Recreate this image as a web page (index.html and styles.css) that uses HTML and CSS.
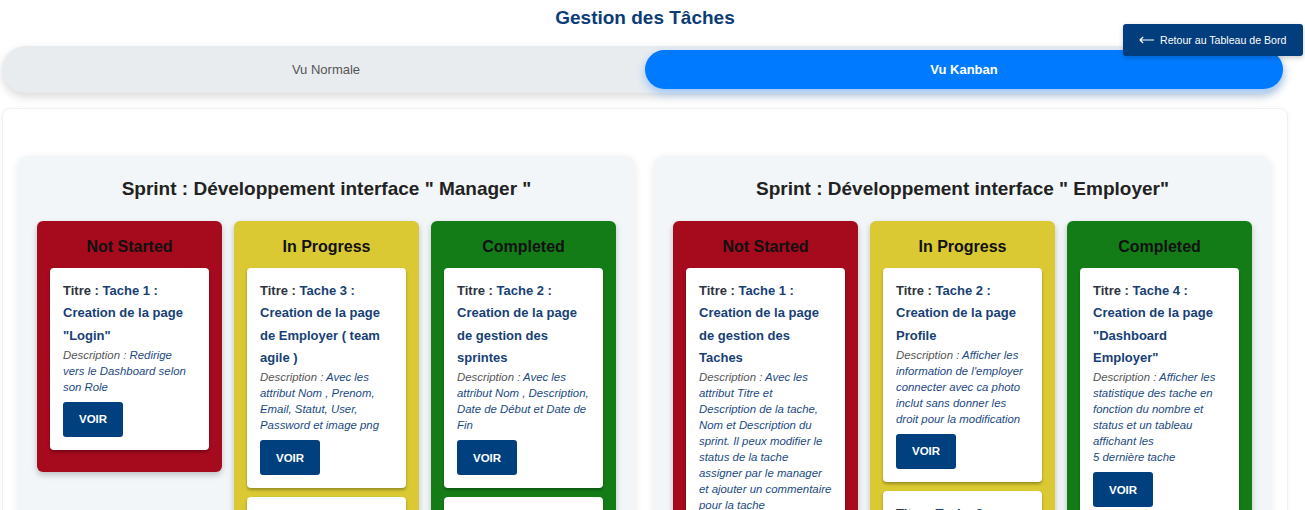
FILE: index.html
```html
<!DOCTYPE html>
<html lang="fr">
<head>
<meta charset="utf-8">
<title>Gestion des Tâches</title>
<link rel="stylesheet" href="styles.css">
</head>
<body>
<div class="app">
  <h1 class="page-title">Gestion des Tâches</h1>
  <button class="back-btn">
    <svg class="back-arrow" width="15" height="8" viewBox="0 0 15 8"><path d="M0.8 4 H15 M0.8 4 L4.2 1 M0.8 4 L4.2 7" fill="none" stroke="#fff" stroke-width="1.1"/></svg>
    <span>Retour au Tableau de Bord</span>
  </button>
  <div class="view-toggle">
    <button class="toggle-btn">Vu Normale</button>
    <button class="toggle-btn active">Vu Kanban</button>
  </div>

  <div class="board">
    <section class="sprint">
      <h2 class="sprint-title">Sprint : Développement interface " Manager "</h2>
      <div class="columns">
        <div class="column col-red">
          <h3 class="col-title">Not Started</h3>
          <div class="task-card">
            <p class="task-title"><span class="label">Titre : </span>Tache 1 : Creation de la page "Login"</p>
            <p class="task-desc"><span class="label">Description : </span>Redirige vers le Dashboard selon son Role</p>
            <button class="voir-btn">VOIR</button>
          </div>
        </div>
        <div class="column col-yellow">
          <h3 class="col-title">In Progress</h3>
          <div class="task-card">
            <p class="task-title"><span class="label">Titre : </span>Tache 3 : Creation de la page de Employer ( team agile )</p>
            <p class="task-desc"><span class="label">Description : </span>Avec les attribut Nom , Prenom, Email, Statut, User, Password et image png</p>
            <button class="voir-btn">VOIR</button>
          </div>
          <div class="task-card">
            <p class="task-title"><span class="label">Titre : </span>Tache 5 : Creation de la page de gestion des Taches</p>
            <p class="task-desc"><span class="label">Description : </span>Avec les attribut Titre et Description de la tache</p>
            <button class="voir-btn">VOIR</button>
          </div>
        </div>
        <div class="column col-green">
          <h3 class="col-title">Completed</h3>
          <div class="task-card">
            <p class="task-title"><span class="label">Titre : </span>Tache 2 : Creation de la page de gestion des sprintes</p>
            <p class="task-desc"><span class="label">Description : </span>Avec les attribut Nom , Description, Date de Début et Date de Fin</p>
            <button class="voir-btn">VOIR</button>
          </div>
          <div class="task-card">
            <p class="task-title"><span class="label">Titre : </span>Tache 4 : Creation de la page "Dashboard Manager"</p>
            <p class="task-desc"><span class="label">Description : </span>Afficher les statistique des sprints et des taches</p>
            <button class="voir-btn">VOIR</button>
          </div>
        </div>
      </div>
    </section>

    <section class="sprint">
      <h2 class="sprint-title">Sprint : Développement interface " Employer"</h2>
      <div class="columns">
        <div class="column col-red">
          <h3 class="col-title">Not Started</h3>
          <div class="task-card">
            <p class="task-title"><span class="label">Titre : </span>Tache 1 : Creation de la page de gestion des Taches</p>
            <p class="task-desc"><span class="label">Description : </span>Avec les attribut Titre et Description de la tache, Nom et Description du sprint. Il peux modifier le status de la tache assigner par le manager et ajouter un commentaire pour la tache</p>
            <button class="voir-btn">VOIR</button>
          </div>
        </div>
        <div class="column col-yellow">
          <h3 class="col-title">In Progress</h3>
          <div class="task-card">
            <p class="task-title"><span class="label">Titre : </span>Tache 2 : Creation de la page Profile</p>
            <p class="task-desc"><span class="label">Description : </span>Afficher les information de l'employer connecter avec ca photo inclut sans donner les droit pour la modification</p>
            <button class="voir-btn">VOIR</button>
          </div>
          <div class="task-card">
            <p class="task-title"><span class="label">Titre : </span>Tache 3 : Creation de la page "Mes Taches"</p>
            <p class="task-desc"><span class="label">Description : </span>Afficher la liste des taches de l'employer</p>
            <button class="voir-btn">VOIR</button>
          </div>
        </div>
        <div class="column col-green">
          <h3 class="col-title">Completed</h3>
          <div class="task-card">
            <p class="task-title"><span class="label">Titre : </span>Tache 4 : Creation de la page "Dashboard Employer"</p>
            <p class="task-desc"><span class="label">Description : </span>Afficher les statistique des tache en fonction du nombre et status et un tableau affichant les<br>5 dernière tache</p>
            <button class="voir-btn">VOIR</button>
          </div>
        </div>
      </div>
    </section>
  </div>
</div>
</body>
</html>
```

FILE: styles.css
```css
* {
  box-sizing: border-box;
}

body {
  margin: 0;
  background: #ffffff;
  font-family: "Liberation Sans", Arial, sans-serif;
  color: #222;
}

.app {
  width: 1286px;
  margin-left: 2px;
  padding-top: 6px;
}

.page-title {
  margin: 0 0 16px;
  font-size: 19px;
  line-height: 24px;
  font-weight: 700;
  text-align: center;
  color: #0b3c78;
}

.back-btn {
  position: absolute;
  top: 24px;
  right: 2px;
  width: 180px;
  height: 32px;
  padding: 0 16px;
  display: flex;
  align-items: center;
  gap: 6px;
  border: none;
  border-radius: 3px;
  background: #023e7d;
  color: #fff;
  font-family: inherit;
  font-size: 10.6px;
  white-space: nowrap;
  box-shadow: 0 2px 5px rgba(0, 0, 0, 0.2);
}

.back-arrow {
  flex: none;
}

.view-toggle {
  display: flex;
  width: 1281px;
  height: 47px;
  padding: 4px 0 4px 5px;
  margin-bottom: 15px;
  border-radius: 24px;
  background: #e9ecef;
  box-shadow: 0 4px 10px rgba(0, 0, 0, 0.15);
}

.toggle-btn {
  flex: 1;
  border: none;
  border-radius: 20px;
  background: transparent;
  font-family: inherit;
  font-size: 13px;
  color: #555;
}

.toggle-btn.active {
  background: #007bff;
  color: #fff;
  font-weight: 700;
  box-shadow: 0 4px 10px rgba(0, 123, 255, 0.35);
}

.board {
  display: grid;
  grid-template-columns: 617px 617px;
  column-gap: 19px;
  align-items: start;
  padding: 47px 16px 40px 15px;
  border: 1px solid #eef0f2;
  border-radius: 8px;
  box-shadow: 0 1px 4px rgba(0, 0, 0, 0.05);
}

.sprint {
  padding: 20px 19px 24px;
  border-radius: 10px;
  background: #f3f6f8;
  box-shadow: 0 2px 8px rgba(0, 0, 0, 0.09);
}

.sprint-title {
  margin: 0 0 21px;
  font-size: 19px;
  line-height: 25px;
  font-weight: 700;
  text-align: center;
  color: #222;
}

.columns {
  display: grid;
  grid-template-columns: repeat(3, 185px);
  gap: 12px;
  align-items: start;
  margin-top: -1px;
}

.column {
  padding: 13px;
  border-radius: 6px;
  box-shadow: 0 3px 6px rgba(0, 0, 0, 0.22);
}

.col-red {
  background: #a50a1d;
}

.col-yellow {
  background: #dac932;
}

.col-green {
  background: #147c17;
}

.col-title {
  margin: 0 0 9px;
  font-size: 16px;
  line-height: 25px;
  font-weight: 700;
  text-align: center;
  color: #111;
}

.task-card {
  margin-bottom: 9px;
  padding: 12px 13px 13px;
  border-radius: 4px;
  background: #fff;
  box-shadow: 0 2px 3px rgba(0, 0, 0, 0.3);
}

.task-title {
  margin: 0;
  font-size: 13px;
  line-height: 22.3px;
  font-weight: 700;
  color: #173f75;
}

.task-title .label {
  color: #2e3440;
}

.task-desc {
  margin: 0 0 7px;
  font-size: 11.4px;
  line-height: 16px;
  font-style: italic;
  color: #1b4a82;
}

.task-desc .label {
  color: #555;
}

.voir-btn {
  display: block;
  height: 35px;
  padding: 0 16px;
  border: none;
  border-radius: 3px;
  background: #00407f;
  color: #fff;
  font-family: inherit;
  font-size: 11.5px;
  font-weight: 700;
}
```
